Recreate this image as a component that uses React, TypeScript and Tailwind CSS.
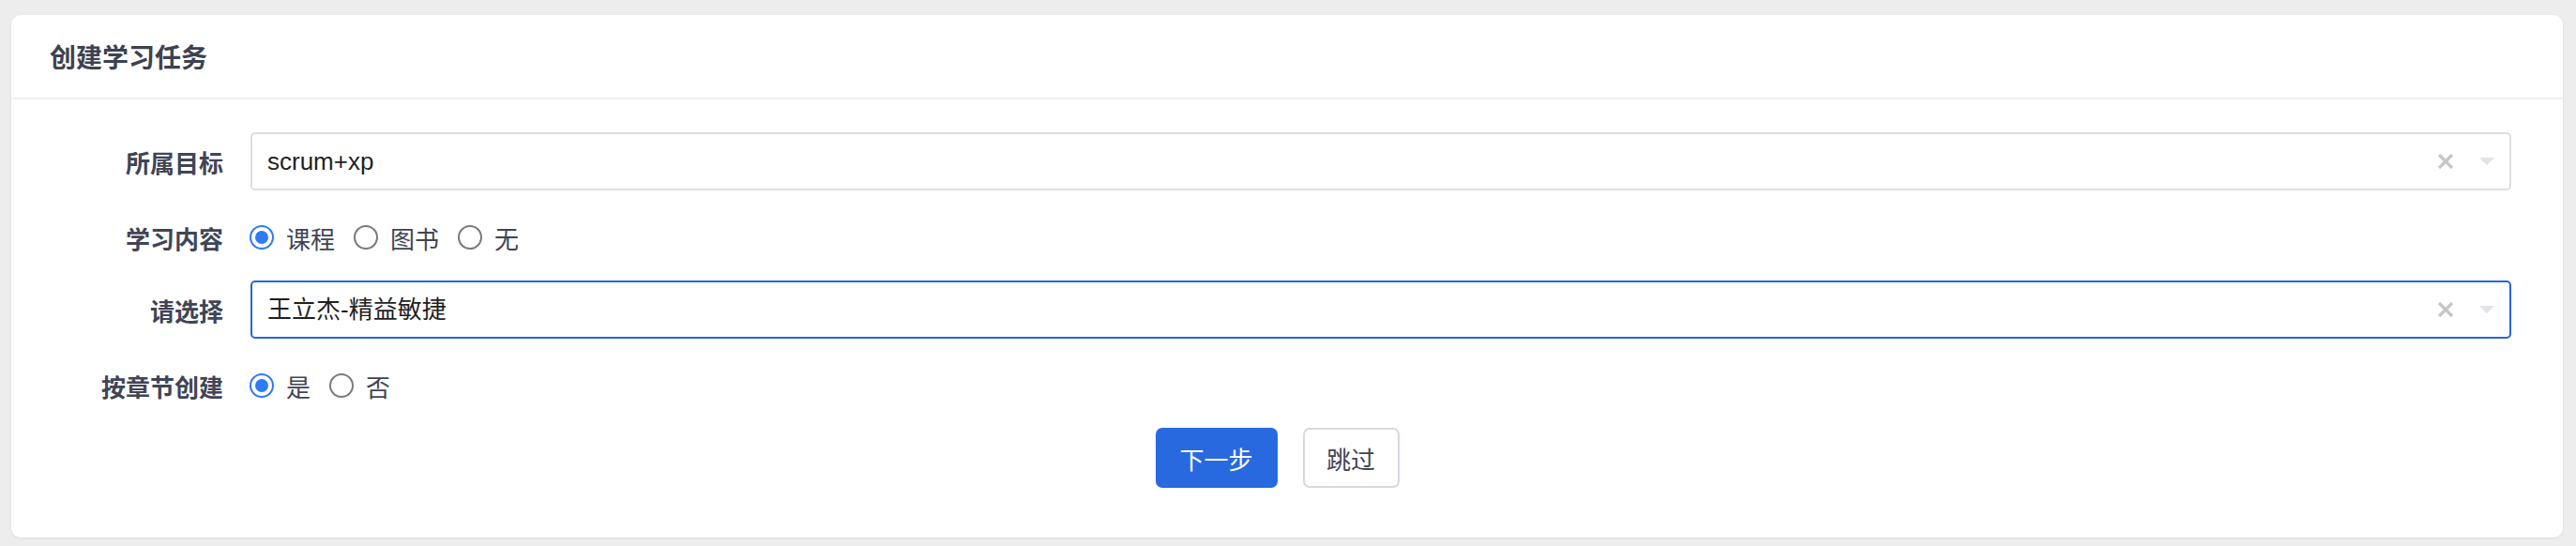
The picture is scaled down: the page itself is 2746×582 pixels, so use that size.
import React from "react";

const cjk = "font-['Noto_Sans_CJK_SC',sans-serif]";
const mixed = "font-['Liberation_Sans','Noto_Sans_CJK_SC',sans-serif]";

const Label: React.FC<{ text: string }> = ({ text }) => (
    <div className={`w-[226px] shrink-0 text-right text-[26px] font-semibold text-[#404555] ${cjk}`}>
        {text}
    </div>
);

const SelectBox: React.FC<{ value: string; focused?: boolean }> = ({ value, focused }) => (
    <div
        className={`ml-[29px] flex-1 h-[62px] flex items-center rounded-[5px] pl-[16px] pr-[16px] ${
            focused ? "border-2 border-[#2566dc]" : "border-2 border-[#dedede]"
        }`}
    >
        <div className={`flex-1 text-[26px] text-[#1f1f1f] ${mixed}`}>{value}</div>
        <svg width="18" height="18" viewBox="0 0 18 18" className="mr-[27px]">
            <path d="M2 2 L16 16 M16 2 L2 16" stroke="#c6c6c6" strokeWidth="3.2" strokeLinecap="butt" />
        </svg>
        <svg width="16" height="8" viewBox="0 0 16 8">
            <path d="M0 0 L16 0 L8 8 Z" fill="#e3e3e9" />
        </svg>
    </div>
);

const Radio: React.FC<{ label: string; checked?: boolean }> = ({ label, checked }) => (
    <div className="flex items-center mr-[20px]">
        {checked ? (
            <span className="w-[26px] h-[26px] rounded-full border-2 border-[#2f7bf5] flex items-center justify-center">
                <span className="w-[14px] h-[14px] rounded-full bg-[#2f7bf5]" />
            </span>
        ) : (
            <span className="w-[26px] h-[26px] rounded-full border-2 border-[#7a7a7a]" />
        )}
        <span className={`ml-[13px] text-[26px] text-[#404555] ${cjk}`}>{label}</span>
    </div>
);

export default function App() {
    return (
        <div className="w-[2746px] h-[582px] bg-[#ededed] pt-[16px] pl-[12px] pr-[14px]">
            <div className="bg-white rounded-[10px] shadow-[0_1px_3px_rgba(0,0,0,0.08)]">
                <div className="h-[90px] flex items-center pl-[41px] border-b-2 border-[#eeeeee]">
                    <h3 className={`text-[28px] font-semibold text-[#3d4252] ${cjk}`}>创建学习任务</h3>
                </div>
                <div className="pt-[35px] pr-[55px] pb-[53px]">
                    <div className="flex items-center">
                        <Label text="所属目标" />
                        <SelectBox value="scrum+xp" />
                    </div>
                    <div className="flex items-center h-[44px] mt-[28px]">
                        <Label text="学习内容" />
                        <div className="ml-[28px] flex items-center">
                            <Radio label="课程" checked />
                            <Radio label="图书" />
                            <Radio label="无" />
                        </div>
                    </div>
                    <div className="flex items-center mt-[24px]">
                        <Label text="请选择" />
                        <SelectBox value="王立杰-精益敏捷" focused />
                    </div>
                    <div className="flex items-center h-[44px] mt-[28px]">
                        <Label text="按章节创建" />
                        <div className="ml-[28px] flex items-center">
                            <Radio label="是" checked />
                            <Radio label="否" />
                        </div>
                    </div>
                    <div className="flex justify-center mt-[23px] pl-[34px] gap-[27px]">
                        <button className={`w-[130px] h-[64px] rounded-[7px] bg-[#2869e0] text-white text-[26px] ${cjk}`}>
                            下一步
                        </button>
                        <button className={`w-[103px] h-[64px] rounded-[7px] border-2 border-[#d6d9e0] bg-white text-[#404555] text-[26px] ${cjk}`}>
                            跳过
                        </button>
                    </div>
                </div>
            </div>
        </div>
    );
}
